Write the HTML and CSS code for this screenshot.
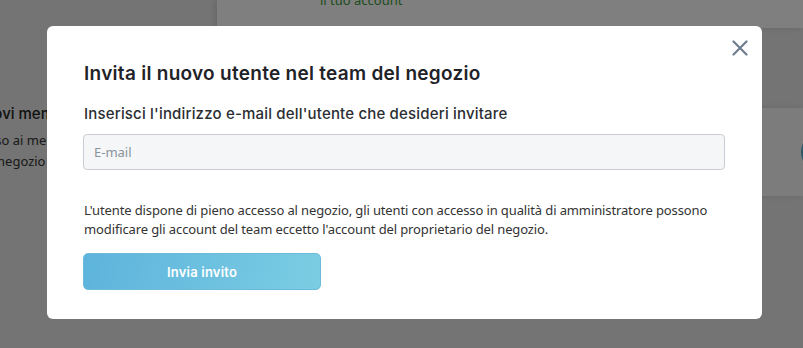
FILE: index.html
```html
<!DOCTYPE html>
<html lang="it">

<head>
    <meta charset="UTF-8">
    <meta name="viewport" content="width=device-width, initial-scale=1.0">
    <title>Invita utente</title>
    <link rel="stylesheet" href="styles.css">
</head>

<body>
    <div class="page">
        <div class="sidebar">
            <div class="side-title">Nuovi membri del team</div>
            <div class="side-text">Accesso ai membri</div>
            <div class="side-text side-last">del negozio</div>
        </div>
        <div class="content">
            <div class="card card-top">
                <span class="link-green">il tuo account</span>
            </div>
            <div class="card card-row">
                <span class="circle"></span>
            </div>
        </div>
    </div>

    <div class="overlay">
        <div class="modal">
            <button class="close" aria-label="Chiudi">
                <svg width="16" height="16" viewBox="0 0 16 16">
                    <path d="M1.5 1.5 L14.5 14.5 M14.5 1.5 L1.5 14.5" stroke="#6e7d8c" stroke-width="2.2" stroke-linecap="round" fill="none"/>
                </svg>
            </button>
            <h2 class="modal-title">Invita il nuovo utente nel team del negozio</h2>
            <label class="modal-label" for="email">Inserisci l'indirizzo e-mail dell'utente che desideri invitare</label>
            <input type="email" id="email" class="email-input" placeholder="E-mail">
            <p class="modal-text">L'utente dispone di pieno accesso al negozio, gli utenti con accesso in qualità di amministratore possono modificare gli account del team eccetto l'account del proprietario del negozio.</p>
            <button class="invite">Invia invito</button>
        </div>
    </div>
</body>

</html>
```

FILE: styles.css
```css
body {
    margin: 0;
    font-family: "Noto Sans", "Open Sans", sans-serif;
    background-color: #e8e8e8;
    overflow: hidden;
}

.page {
    display: flex;
    height: 348px;
}

.sidebar {
    width: 217px;
    flex-shrink: 0;
    background-color: #e8e8e8;
    padding-top: 104px;
    overflow: hidden;
}

.side-title {
    margin-left: -27px;
    margin-bottom: 7px;
    font-family: Inter, sans-serif;
    font-size: 15px;
    font-weight: 500;
    color: #222;
    white-space: nowrap;
}

.side-text {
    margin-left: -39px;
    font-size: 13px;
    line-height: 21px;
    color: #333;
    white-space: nowrap;
}

.side-last {
    margin-left: -25px;
}

.content {
    flex: 1;
    display: flex;
    flex-direction: column;
    gap: 80px;
}

.card {
    background: #fff;
    box-shadow: -2px 0 6px rgba(0, 0, 0, 0.12);
}

.card-top {
    height: 28px;
    padding-left: 103px;
    display: flex;
    align-items: flex-start;
    overflow: hidden;
}

.link-green {
    font-size: 13px;
    line-height: 14px;
    color: #3a9a3a;
    margin-top: -7px;
}

.card-row {
    height: 88px;
    background: #f9f9f9;
    display: flex;
    align-items: center;
    justify-content: flex-end;
    overflow: hidden;
}

.circle {
    width: 40px;
    height: 40px;
    border-radius: 50%;
    background: #4fb0d0;
    margin-right: -38px;
}

.overlay {
    position: fixed;
    inset: 0;
    background: rgba(0, 0, 0, 0.5);
    display: flex;
    justify-content: center;
    align-items: flex-start;
    padding-top: 26px;
    padding-left: 6px;
}

.modal {
    position: relative;
    width: 715px;
    box-sizing: border-box;
    background: #fff;
    border-radius: 6px;
    padding: 36px 37px 29px 36px;
}

.close {
    position: absolute;
    top: 14px;
    right: 14px;
    width: 16px;
    height: 16px;
    padding: 0;
    border: none;
    background: none;
    cursor: pointer;
}

.close svg {
    display: block;
}

.modal-title {
    margin: 0;
    font-family: Inter, sans-serif;
    font-size: 19px;
    line-height: 24px;
    font-weight: 600;
    letter-spacing: 0.28px;
    color: #1f2328;
    padding-left: 1px;
}

.modal-label {
    display: block;
    margin-top: 18px;
    font-family: Inter, sans-serif;
    font-size: 15px;
    line-height: 20px;
    font-weight: 500;
    letter-spacing: 0.18px;
    color: #2a2e33;
    padding-left: 1px;
}

.email-input {
    display: block;
    width: 100%;
    height: 36px;
    margin-top: 10px;
    box-sizing: border-box;
    padding: 0 10px;
    font-family: "Noto Sans", sans-serif;
    font-size: 13px;
    background: #f5f6f7;
    border: 1px solid #c9cdd3;
    border-radius: 4px;
    color: #333;
}

.email-input::placeholder {
    color: #8a939c;
}

.modal-text {
    margin: 31px 0 0 1px;
    font-size: 13px;
    line-height: 19px;
    letter-spacing: -0.12px;
    color: #333;
}

.invite {
    display: block;
    width: 238px;
    height: 37px;
    margin-top: 14px;
    border: 1px solid #6cbad9;
    border-radius: 5px;
    background: linear-gradient(100deg, #5db4dc 0%, #7bcde3 100%);
    color: #fff;
    font-family: Inter, sans-serif;
    font-size: 13px;
    font-weight: 600;
    letter-spacing: 0.2px;
    cursor: pointer;
}
```
